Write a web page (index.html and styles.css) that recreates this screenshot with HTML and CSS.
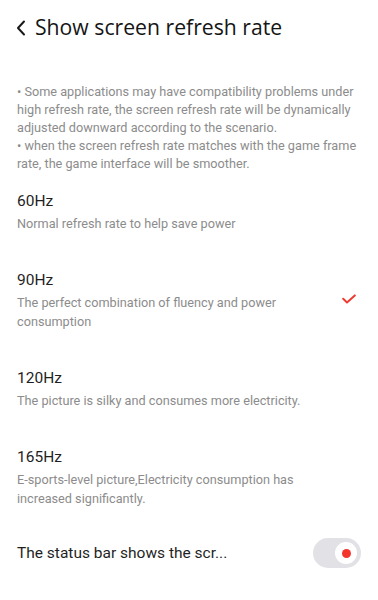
FILE: index.html
```html
<!DOCTYPE html>
<html lang="en">
<head>
<meta charset="utf-8">
<title>Show screen refresh rate</title>
<link rel="stylesheet" href="styles.css">
</head>
<body>
<div class="page">
  <header class="header">
    <svg class="back" width="10" height="16" viewBox="0 0 10 16" aria-hidden="true">
      <path d="M8 1.5 L2 8 L8 14.5" fill="none" stroke="#1a1a1a" stroke-width="2" stroke-linecap="round" stroke-linejoin="round"/>
    </svg>
    <h1 class="title">Show screen refresh rate</h1>
  </header>

  <p class="desc">• Some applications may have compatibility problems under high refresh rate, the screen refresh rate will be dynamically adjusted downward according to the scenario.<br>• when the screen refresh rate matches with the game frame rate, the game interface will be smoother.</p>

  <ul class="options">
    <li class="option">
      <div class="option-text">
        <div class="option-title">60Hz</div>
        <div class="option-sub">Normal refresh rate to help save power</div>
      </div>
    </li>
    <li class="option">
      <div class="option-text">
        <div class="option-title">90Hz</div>
        <div class="option-sub">The perfect combination of fluency and power consumption</div>
      </div>
      <svg class="check" width="14" height="10" viewBox="0 0 14 10" aria-hidden="true">
        <path d="M1.2 4.8 L5 8.4 L12.8 1.4" fill="none" stroke="#ee3b30" stroke-width="2" stroke-linecap="round" stroke-linejoin="round"/>
      </svg>
    </li>
    <li class="option">
      <div class="option-text">
        <div class="option-title">120Hz</div>
        <div class="option-sub">The picture is silky and consumes more electricity.</div>
      </div>
    </li>
    <li class="option">
      <div class="option-text">
        <div class="option-title">165Hz</div>
        <div class="option-sub">E-sports-level picture,Electricity consumption has increased significantly.</div>
      </div>
    </li>
  </ul>

  <div class="switch-row">
    <span class="switch-label">The status bar shows the scr...</span>
    <span class="toggle"><span class="knob"><span class="dot"></span></span></span>
  </div>
</div>
</body>
</html>
```

FILE: styles.css
```css
* { box-sizing: border-box; }
html, body { margin: 0; padding: 0; background: #ffffff; }
body {
  font-family: Roboto, "Liberation Sans", sans-serif;
  color: #1f1f1f;
}
.page { width: 378px; }

.header {
  height: 54px;
  display: flex;
  align-items: center;
  padding-left: 16px;
}
.back { flex: none; margin-right: 9px; margin-top: 2px; }
.title {
  margin: 0;
  font-family: "Open Sans", "Noto Sans", sans-serif;
  font-weight: 400;
  font-size: 21.2px;
  line-height: 30px;
  color: #151515;
}

.desc {
  margin: 29px 0 0;
  padding: 0 12px 0 17px;
  font-size: 12.7px;
  line-height: 18px;
  color: #8c8c8c;
}

.options { list-style: none; margin: 0; padding: 0; }
.option {
  display: flex;
  align-items: center;
  padding: 17px 22px 19px 17px;
}
.option-text { flex: 1; padding-right: 40px; }
.option-title {
  font-size: 15.5px;
  line-height: 22px;
  color: #1f1f1f;
}
.option-sub {
  margin-top: 2px;
  font-size: 12.7px;
  line-height: 19px;
  color: #8c8c8c;
}
.check { flex: none; margin-top: -2px; }

.switch-row {
  height: 44px;
  margin-top: 4px;
  display: flex;
  align-items: center;
  justify-content: space-between;
  padding: 0 17px;
}
.switch-label { font-size: 15.5px; color: #1f1f1f; }
.toggle {
  width: 48px;
  height: 30px;
  border-radius: 15px;
  background: #e1e1e6;
  display: flex;
  align-items: center;
  justify-content: flex-end;
  padding-right: 4px;
}
.knob {
  width: 22px;
  height: 22px;
  border-radius: 50%;
  background: #ffffff;
  display: flex;
  align-items: center;
  justify-content: center;
}
.dot {
  width: 9px;
  height: 9px;
  border-radius: 50%;
  background: #f2362c;
}
```
